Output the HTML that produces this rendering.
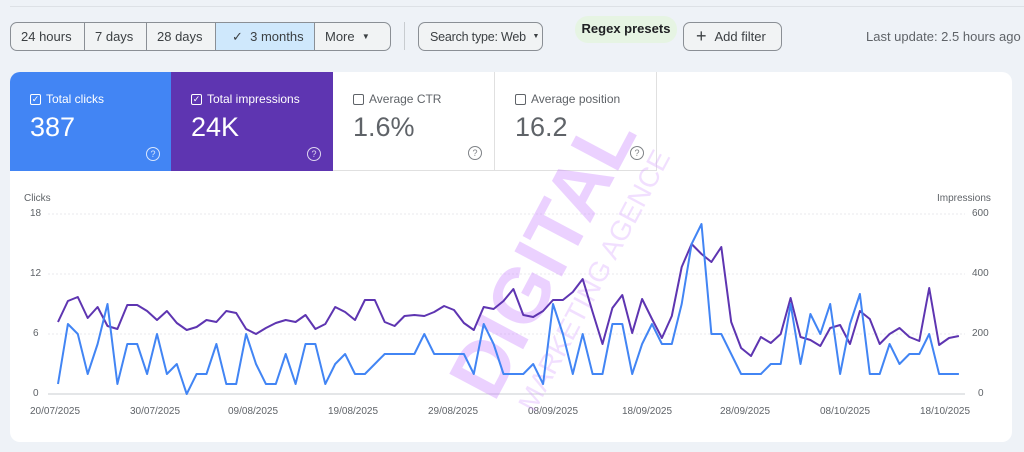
<!DOCTYPE html>
<html><head><meta charset="utf-8"><style>
*{box-sizing:border-box;margin:0;padding:0}
body{width:1024px;height:452px;overflow:hidden;background:#eef2f7;font-family:"Liberation Sans",sans-serif;position:relative;color:#3c4043}
.topline{position:absolute;left:10px;right:0;top:6px;border-top:1px solid #dde1e6}
.seg{position:absolute;top:22px;height:29px;left:10px;display:flex;border:1px solid #8a8f95;border-radius:7px;overflow:hidden;background:#f1f3f4}
.seg div{height:100%;display:flex;align-items:center;padding:0 10px;font-size:13px;border-right:1px solid #8a8f95;color:#3c4043;white-space:nowrap}
.seg div:last-child{border-right:none}
.btn{position:absolute;top:22px;height:29px;border:1px solid #8a8f95;border-radius:7px;display:flex;align-items:center;font-size:13px;padding:0 12px;background:#f1f3f4;white-space:nowrap}
.card{position:absolute;left:10px;top:72px;width:1002px;height:370px;background:#fff;border-radius:10px;overflow:hidden}
.tile{position:absolute;top:0;height:99px;width:162px;padding:20px 0 0 20px}
.tile .lab{font-size:12px;display:flex;align-items:center;gap:5px;white-space:nowrap}
.cb{width:11px;height:11px;border:1.3px solid currentColor;border-radius:2px;display:inline-block;position:relative;font-size:9px;line-height:9px;text-align:center}
.tile .val{font-size:27px;margin-top:6px}
.q{position:absolute;right:12px;bottom:10px;width:14px;height:14px;border:1.3px solid currentColor;border-radius:50%;font-size:9px;text-align:center;line-height:12px;opacity:.8}
.ax{position:absolute;font-size:10px;color:#5f6368}
</style></head><body>
<div class="topline"></div>
<div class="seg"><div style="width:74px">24 hours</div><div style="width:62px">7 days</div><div style="width:69px">28 days</div><div style="width:99px;background:#cfe8fc;padding-left:16px">✓&nbsp;&nbsp;3 months</div><div style="width:75px">More&nbsp;&nbsp;<span style="font-size:8px">▼</span></div></div>
<div style="position:absolute;left:404px;top:22px;height:28px;border-left:1px solid #c8ccd0"></div>
<div class="btn" style="left:418px;width:125px;padding:0 8px 0 11px;font-size:12.5px;letter-spacing:-0.2px">Search type: Web&nbsp;&nbsp;<span style="font-size:7px">▼</span></div>
<div style="position:absolute;left:575px;top:16px;width:102px;height:27px;border-radius:13px;background:#e6f4e3;font-size:13px;font-weight:bold;text-align:center;line-height:26px;color:#202124">Regex presets</div>
<div class="btn" style="left:683px;width:99px"><span style="font-size:18px;margin-right:8px;font-weight:300">+</span>Add filter</div>
<div style="position:absolute;left:866px;top:29px;font-size:13px;color:#5f6368;white-space:nowrap">Last update: 2.5 hours ago</div>
<div class="card">
<div class="tile" style="left:0;background:#4285f4;color:#fff"><div class="lab"><span class="cb">✓</span>Total clicks</div><div class="val">387</div><div class="q">?</div></div>
<div class="tile" style="left:161px;background:#5e35b1;color:#fff"><div class="lab"><span class="cb">✓</span>Total impressions</div><div class="val">24K</div><div class="q">?</div></div>
<div class="tile" style="left:323px;color:#5f6368;border-right:1px solid #e0e0e0;border-bottom:1px solid #e0e0e0"><div class="lab"><span class="cb"></span>Average CTR</div><div class="val">1.6%</div><div class="q">?</div></div>
<div class="tile" style="left:485px;color:#5f6368;border-right:1px solid #e0e0e0;border-bottom:1px solid #e0e0e0"><div class="lab"><span class="cb"></span>Average position</div><div class="val">16.2</div><div class="q">?</div></div>
</div>
<div class="ax" style="left:24px;top:193px">Clicks</div>
<div class="ax" style="left:937px;top:193px">Impressions</div>
<div class="ax" style="left:30px;top:208px">18</div><div class="ax" style="left:30px;top:268px">12</div><div class="ax" style="left:33px;top:328px">6</div><div class="ax" style="left:33px;top:388px">0</div>
<div class="ax" style="left:972px;top:208px">600</div><div class="ax" style="left:972px;top:268px">400</div><div class="ax" style="left:972px;top:328px">200</div><div class="ax" style="left:978px;top:388px">0</div>
<div class="ax" style="left:30px;top:406px;width:960px;height:14px">
<span style="position:absolute;left:0">20/07/2025</span><span style="position:absolute;left:100px">30/07/2025</span><span style="position:absolute;left:198px">09/08/2025</span><span style="position:absolute;left:298px">19/08/2025</span><span style="position:absolute;left:398px">29/08/2025</span><span style="position:absolute;left:498px">08/09/2025</span><span style="position:absolute;left:592px">18/09/2025</span><span style="position:absolute;left:690px">28/09/2025</span><span style="position:absolute;left:790px">08/10/2025</span><span style="position:absolute;left:890px">18/10/2025</span></div>
<svg style="position:absolute;left:0;top:0" width="1024" height="452">
<g stroke="#e8eaed" stroke-width="1" stroke-dasharray="2 2"><line x1="48" x2="965" y1="214" y2="214"/><line x1="48" x2="965" y1="274" y2="274"/><line x1="48" x2="965" y1="334" y2="334"/></g>
<line x1="48" x2="965" y1="394" y2="394" stroke="#c8ccd0"/>
<g opacity="0.35" transform="rotate(-62 520 270)">
<text x="390" y="310" font-size="78" font-weight="bold" fill="#c77dff" font-family="Liberation Sans">DIGITAL</text>
<text x="400" y="350" font-size="28" fill="#d9a6ff" font-family="Liberation Sans">MARKETING AGENCE</text></g>
<g transform="translate(58,394) scale(9.9,-10)" fill="none" stroke-linejoin="round">
<polyline vector-effect="non-scaling-stroke" stroke="#5e35b1" stroke-width="2" points="0,7.2 1,9.3 2,9.7 3,7.6 4,8.7 5,6.8 6,6.5 7,8.9 8,8.9 9,8.3 10,7.4 11,8.3 12,7.1 13,6.4 14,6.7 15,7.4 16,7.2 17,8.3 18,8.1 19,6.5 20,6 21,6.6 22,7.1 23,7.4 24,7.2 25,7.9 26,6.5 27,7 28,8.7 29,8.2 30,7.4 31,9.4 32,9.4 33,7.2 34,6.8 35,7.8 36,7.9 37,7.8 38,8.2 39,8.8 40,8.4 41,7.1 42,6.4 43,8.7 44,8.5 45,9.3 46,10.5 47,7.9 48,7.7 49,8.3 50,9.4 51,9.4 52,10.2 53,11.5 54,8.2 55,5 56,8.6 57,9.9 58,6.1 59,9.5 60,7.5 61,5.6 62,7.8 63,12.7 64,15 65,14 66,13.2 67,14.7 68,7.2 69,4.6 70,3.8 71,5.7 72,5.1 73,6 74,9.6 75,5.7 76,5.4 77,4.8 78,6.6 79,6.9 80,5 81,8.3 82,7.5 83,5 84,6 85,6.6 86,5.7 87,5.3 88,10.6 89,4.9 90,5.6 91,5.8"/>
<polyline vector-effect="non-scaling-stroke" stroke="#4285f4" stroke-width="2" points="0,1 1,7 2,6 3,2 4,5 5,9 6,1 7,5 8,5 9,2 10,6 11,2 12,3 13,0 14,2 15,2 16,5 17,1 18,1 19,6 20,3 21,1 22,1 23,4 24,1 25,5 26,5 27,1 28,3 29,4 30,2 31,2 32,3 33,4 34,4 35,4 36,4 37,6 38,4 39,4 40,4 41,4 42,2 43,7 44,5 45,2 46,2 47,2 48,3 49,1 50,9 51,6 52,2 53,6 54,2 55,2 56,7 57,7 58,2 59,5 60,7 61,5 62,5 63,9 64,15 65,17 66,6 67,6 68,4 69,2 70,2 71,2 72,3 73,3 74,9 75,3 76,8 77,6 78,9 79,2 80,7 81,10 82,2 83,2 84,5 85,3 86,4 87,4 88,6 89,2 90,2 91,2"/>
</g>
</svg>
</body></html>
